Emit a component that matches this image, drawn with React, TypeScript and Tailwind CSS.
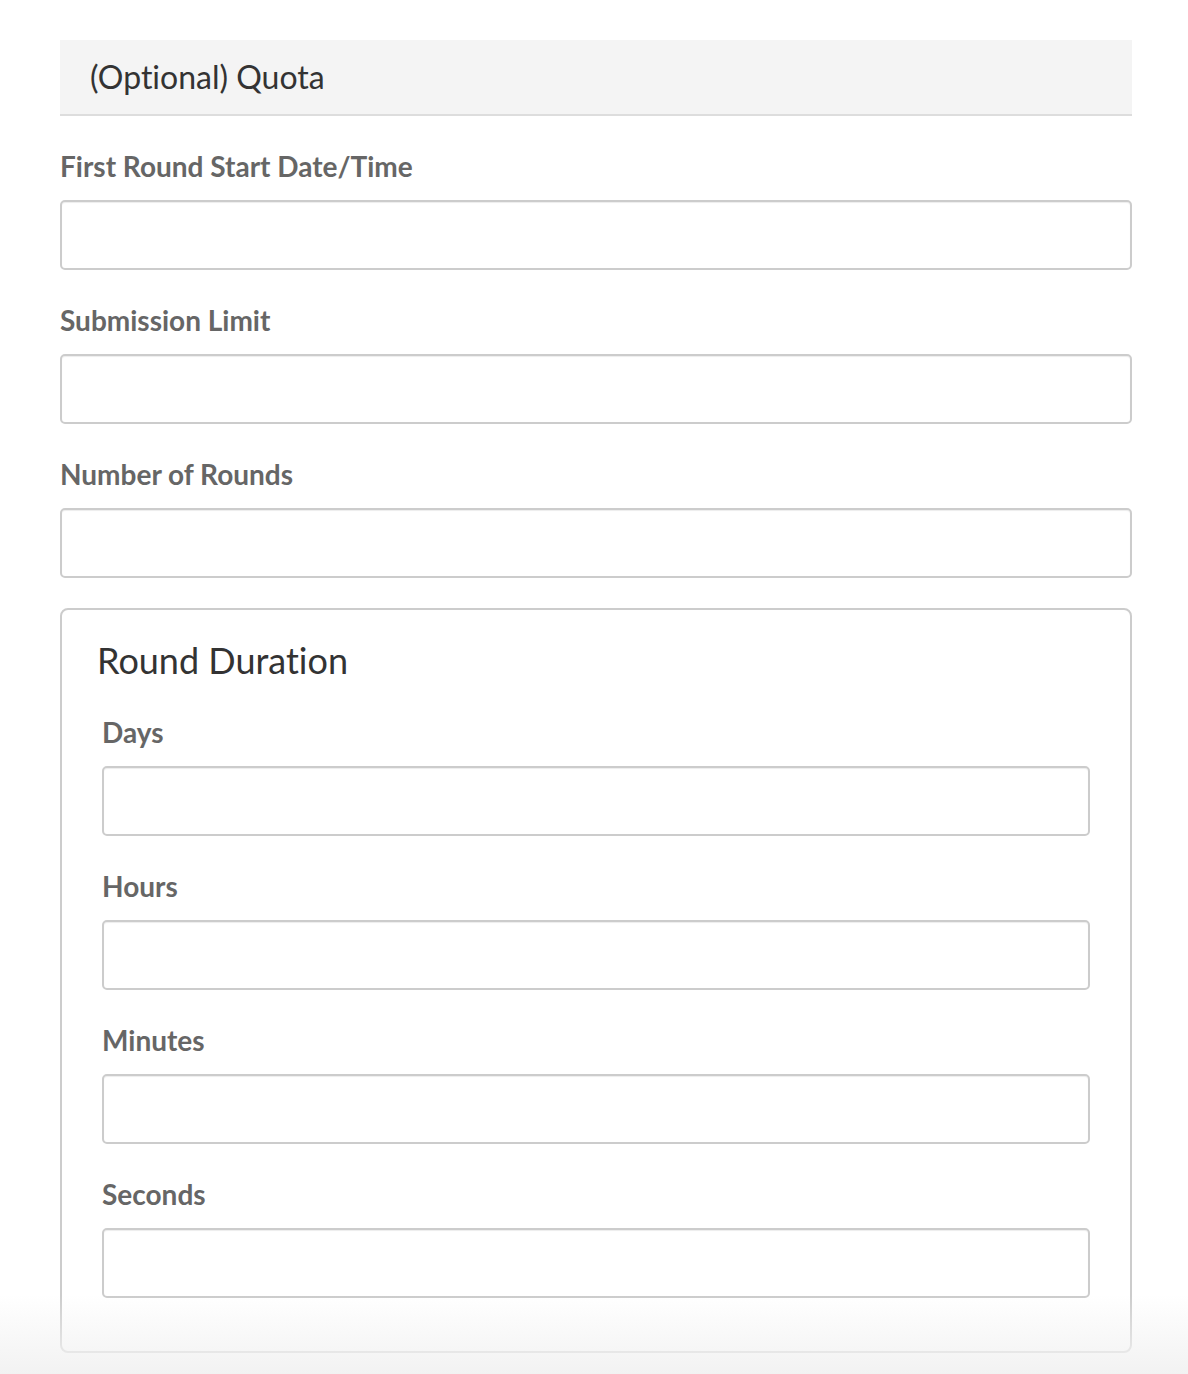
export default function App() {
  const mainFields = ['First Round Start Date/Time', 'Submission Limit', 'Number of Rounds'];
  const durationFields = ['Days', 'Hours', 'Minutes', 'Seconds'];

  return (
    <div
      className="relative min-h-[1374px] bg-white pl-[60px] pr-[56px] pt-[40px] pb-[22px] w-[1188px] [font-variant-ligatures:none]"
      style={{ fontFamily: 'Lato, "Open Sans", sans-serif' }}
    >
      <div className="bg-[#f4f4f4] border-b-2 border-[#dddddd] h-[76px] flex items-center pl-[30px]">
        <h3 className="text-[32px] text-[#333333] leading-none">(Optional) Quota</h3>
      </div>

      <div className="mt-[34px] flex flex-col gap-[34px]">
        {mainFields.map((f) => (
          <Field key={f} label={f} />
        ))}
      </div>

      <div className="mt-[30px] border-2 border-[#cccccc] rounded-[8px] px-[40px] pt-[30px] pb-[53px]">
        <h4 className="text-[36px] text-[#333333] leading-[41px] -ml-[5px]">Round Duration</h4>
        <div className="mt-[35px] flex flex-col gap-[34px]">
          {durationFields.map((f) => (
            <Field key={f} label={f} />
          ))}
        </div>
      </div>

      {/* fade at the bottom of the viewport */}
      <div className="pointer-events-none absolute left-0 right-0 bottom-0 h-[80px] bg-gradient-to-b from-white/0 to-[#f2f2f2]" />
    </div>
  );
}

function Field({ label }: { label: string }) {
  return (
    <div>
      <label className="block text-[28px] font-bold text-[#666666] leading-[33px] mb-[17px]">{label}</label>
      <input
        type="text"
        className="block w-full h-[70px] border-2 border-[#cccccc] rounded-[5px] bg-white shadow-[inset_0_1px_1px_rgba(0,0,0,0.075)] outline-none"
      />
    </div>
  );
}
